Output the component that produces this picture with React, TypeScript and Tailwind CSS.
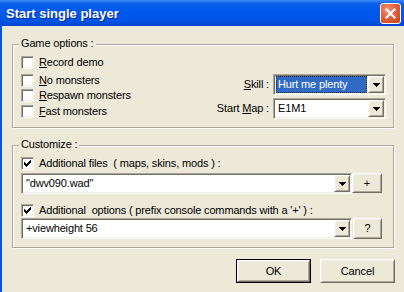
import React from "react";

const sunken =
  "border border-t-[#aca899] border-l-[#aca899] border-r-white border-b-white shadow-[inset_1px_1px_0_#716f64,inset_-1px_-1px_0_#f1efe2]";
const raised =
  "border border-t-white border-l-white border-r-[#716f64] border-b-[#716f64] shadow-[inset_1px_1px_0_#f1efe2,inset_-1px_-1px_0_#aca899]";
const etched =
  "border border-[#aca899] shadow-[inset_1px_1px_0_#fff,1px_1px_0_#fff]";

const Arrow = (): JSX.Element => (
  <svg width="7" height="4" viewBox="0 0 7 4" shapeRendering="crispEdges">
    <path d="M0 0h7v1h-1v1h-1v1h-1v1h-1v-1h-1v-1h-1v-1h-1z" fill="#000" />
  </svg>
);

const DropButton = (): JSX.Element => (
  <div className={`flex h-full w-[16px] items-center justify-center bg-[#ece9d8] ${raised}`}>
    <Arrow />
  </div>
);

const Checkbox = ({ checked = false }: { checked?: boolean }): JSX.Element => (
  <div className={`flex h-[13px] w-[13px] shrink-0 items-center justify-center bg-white ${sunken}`}>
    {checked && (
      <svg width="7" height="7" viewBox="0 0 7 7" shapeRendering="crispEdges">
        <path
          d="M6 0h1v3h-1v1h-1v1h-1v1h-1v1h-1v-1h-1v-1h-1v-3h1v1h1v1h1v-1h1v-1h1z"
          fill="#000"
        />
      </svg>
    )}
  </div>
);

const CheckRow = ({
  children,
  checked,
  className = "",
}: {
  children: React.ReactNode;
  checked?: boolean;
  className?: string;
}): JSX.Element => (
  <div className={`flex h-[13px] items-center gap-[5px] ${className}`}>
    <Checkbox checked={checked} />
    <span className="whitespace-pre leading-[13px]">{children}</span>
  </div>
);

const Combo = ({
  value,
  selected = false,
  className = "",
}: {
  value: string;
  selected?: boolean;
  className?: string;
}): JSX.Element => (
  <div className={`flex h-[21px] bg-white p-[1px] ${sunken} ${className}`}>
    <div className="flex min-w-0 flex-1 items-center">
      {selected ? (
        <div className="mx-[1px] flex h-full flex-1 items-center border border-dotted border-[#2a2a2a] bg-[#316ac5] pl-[1px] text-white">
          {value}
        </div>
      ) : (
        <span className="whitespace-pre pl-[3px]">{value}</span>
      )}
    </div>
    <DropButton />
  </div>
);

const GroupLabel = ({ text }: { text: string }): JSX.Element => (
  <span className="absolute left-[6px] top-[-8px] bg-[#ece9d8] px-[2px] leading-[13px]">
    {text}
  </span>
);

export default function App(): JSX.Element {
  return (
    <div className="flex h-[292px] w-[404px] flex-col overflow-hidden bg-[#ece9d8] font-['Liberation_Sans',Arial,sans-serif] text-[11px] tracking-[-0.15px] text-black">
      {/* Title bar */}
      <div className="flex h-[26px] shrink-0 items-center justify-between bg-[linear-gradient(180deg,#3d8cf5_0%,#0a5eea_14%,#0058ee_45%,#0055e5_80%,#0046d2_100%)] pl-[6px] pr-[3px]">
        <span className="pt-[1px] text-[13px] font-bold tracking-normal text-white [text-shadow:1px_1px_0_#0b2a8c]">
          Start single player
        </span>
        <div className="flex h-[21px] w-[21px] items-center justify-center rounded-[3px] border border-white bg-[radial-gradient(circle_at_35%_30%,#f0957a_0%,#e2603a_45%,#cc4217_100%)]">
          <svg width="11" height="11" viewBox="0 0 11 11">
            <path d="M1.5 1.5l8 8M9.5 1.5l-8 8" stroke="#fff" strokeWidth="2.2" strokeLinecap="square" />
          </svg>
        </div>
      </div>

      {/* Body */}
      <div className="flex flex-1 flex-col border-l-2 border-[#0055ea] pl-[10px]">
        {/* Game options */}
        <div className={`relative mt-[18px] flex h-[84px] w-[382px] ${etched}`}>
          <GroupLabel text="Game options :" />
          <div className="flex flex-col pl-[8px] pt-[11px]">
            <CheckRow>
              <u>R</u>ecord demo
            </CheckRow>
            <CheckRow className="mt-[5px]">
              <u>N</u>o monsters
            </CheckRow>
            <CheckRow className="mt-[2px]">
              <u>R</u>espawn monsters
            </CheckRow>
            <CheckRow className="mt-[3px]">
              <u>F</u>ast monsters
            </CheckRow>
          </div>
          <div className="ml-auto flex flex-col gap-[3px] pr-[7px] pt-[29px]">
            <div className="flex items-center justify-end gap-[4px]">
              <span>
                <u>S</u>kill :
              </span>
              <Combo value="Hurt me plenty" selected className="w-[113px]" />
            </div>
            <div className="flex items-center justify-end gap-[4px]">
              <span>
                Start <u>M</u>ap :
              </span>
              <Combo value="E1M1" className="w-[113px]" />
            </div>
          </div>
        </div>

        {/* Customize */}
        <div className={`relative mt-[17px] flex h-[103px] w-[382px] flex-col pl-[8px] pt-[11px] ${etched}`}>
          <GroupLabel text="Customize :" />
          <CheckRow checked>{"Additional files  ( maps, skins, mods ) :"}</CheckRow>
          <div className="mt-[3px] flex">
            <Combo value={'"dwv090.wad"'} className="w-[331px]" />
            <button className={`h-[20px] w-[30px] bg-[#ece9d8] ${raised}`}>+</button>
          </div>
          <CheckRow checked className="mt-[10px]">
            {"Additional  options ( prefix console commands with a '+' ) :"}
          </CheckRow>
          <div className="mt-[1px] flex">
            <Combo value="+viewheight 56" className="w-[331px]" />
            <button className={`ml-[1px] h-[21px] w-[29px] bg-[#ece9d8] ${raised}`}>?</button>
          </div>
        </div>

        {/* Dialog buttons */}
        <div className="mt-[11px] flex w-[383px] justify-end gap-[9px]">
          <div className="h-[24px] w-[75px] border border-black">
            <button className={`h-full w-full bg-[#ece9d8] ${raised}`}>OK</button>
          </div>
          <button className={`h-[24px] w-[75px] bg-[#ece9d8] ${raised}`}>Cancel</button>
        </div>
      </div>
    </div>
  );
}
